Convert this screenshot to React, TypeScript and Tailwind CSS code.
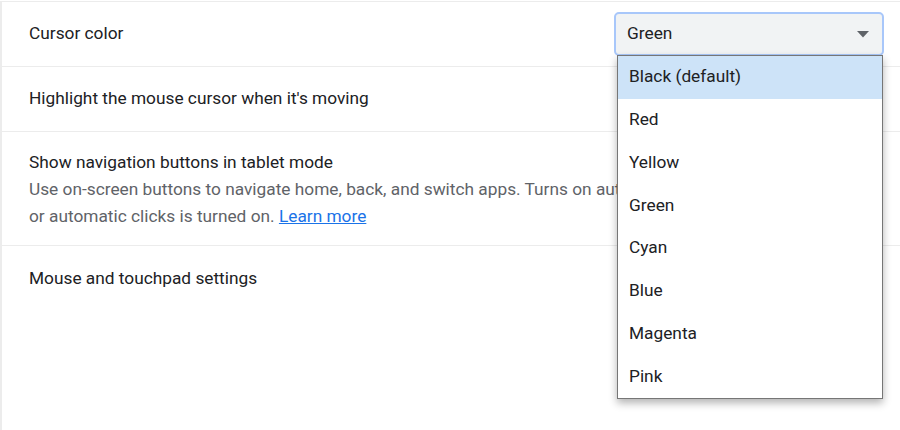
import { useState } from "react";

const colors = ["Black (default)", "Red", "Yellow", "Green", "Cyan", "Blue", "Magenta", "Pink"];

function CursorSelect() {
  const [value] = useState("Green");
  return (
    <div className="relative w-[270px]">
      <div className="flex h-[44px] items-center justify-between rounded-[5px] border-2 border-[#a8c7fa] bg-[#f1f3f4] pl-[11px] pr-[13px] text-[17.3px] text-[#202124]">
        <span>{value}</span>
        <svg width="12" height="7" viewBox="0 0 12 7">
          <path d="M0 0 L12 0 L6 6.5 Z" fill="#5f6368" />
        </svg>
      </div>
      <ul className="absolute left-[3px] top-[43px] z-10 w-[266px] border border-[#767676] bg-white shadow-[0_4px_8px_rgba(0,0,0,0.3)]">
        {colors.map((c, i) => (
          <li
            key={c}
            className={`flex h-[42.75px] items-center pl-[11px] text-[17.3px] text-[#202124] ${i === 0 ? "bg-[#cde3f8]" : ""}`}
          >
            {c}
          </li>
        ))}
      </ul>
    </div>
  );
}

export default function App() {
  return (
    <div
      className="h-[430px] w-[900px] overflow-hidden bg-white"
      style={{ fontFamily: "Roboto, 'Liberation Sans', sans-serif" }}
    >
      <div className="mt-px h-full border-l-2 border-t border-[#ececec]">
        <div className="flex h-[65px] items-center justify-between border-b border-[#ececec] pl-[27px] pr-[16px]">
          <span className="text-[17.3px] text-[#202124]">Cursor color</span>
          <CursorSelect />
        </div>
        <div className="flex h-[65px] items-center border-b border-[#ececec] pl-[27px]">
          <span className="text-[17.3px] text-[#202124]">Highlight the mouse cursor when it's moving</span>
        </div>
        <div className="h-[114px] border-b border-[#ececec] pl-[27px] pt-[17px]">
          <div className="text-[17.3px] leading-[27px] text-[#202124]">Show navigation buttons in tablet mode</div>
          <div className="w-[588px] overflow-hidden whitespace-nowrap text-[17.3px] leading-[27px] text-[#5f6368]">
            Use on-screen buttons to navigate home, back, and switch apps. Turns on automatically when ChromeVox
            <br />
            or automatic clicks is turned on.{" "}
            <a className="text-[#1a73e8] underline" href="#">
              Learn more
            </a>
          </div>
        </div>
        <div className="flex h-[65px] items-center pl-[27px]">
          <span className="text-[17.3px] text-[#202124]">Mouse and touchpad settings</span>
        </div>
      </div>
    </div>
  );
}
